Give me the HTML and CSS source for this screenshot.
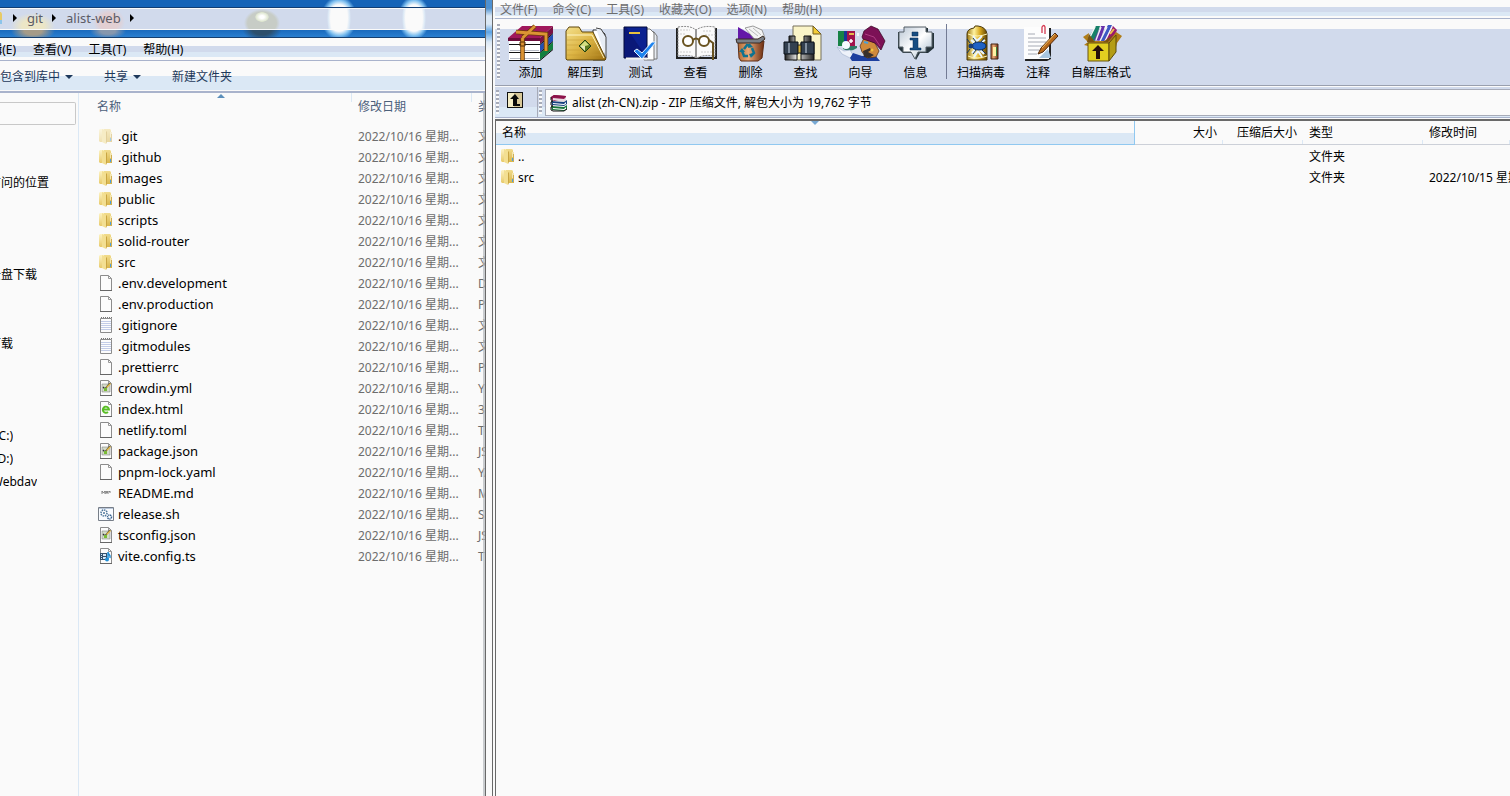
FILE: index.html
```html
<!DOCTYPE html>
<html lang="zh-CN">
<head>
<meta charset="utf-8">
<title>alist-web</title>
<link rel="stylesheet" href="styles.css">
</head>
<body>
<svg class="defs" aria-hidden="true">
  <defs>
    <linearGradient id="gold" x1="0" x2="1"><stop offset="0" stop-color="#9a7410"/><stop offset=".35" stop-color="#fff3a0"/><stop offset=".65" stop-color="#d9a91f"/><stop offset="1" stop-color="#5f4305"/></linearGradient>
    <linearGradient id="fold" x1="0" y1="0" x2="1" y2="1"><stop offset="0" stop-color="#f4e08c"/><stop offset=".5" stop-color="#dcb443"/><stop offset="1" stop-color="#9c6f10"/></linearGradient>
    <linearGradient id="steel" x1="0" x2="1"><stop offset="0" stop-color="#222"/><stop offset=".4" stop-color="#e8e8e8"/><stop offset="1" stop-color="#222"/></linearGradient>
    <linearGradient id="clay" x1="0" x2="1"><stop offset="0" stop-color="#b06a34"/><stop offset=".4" stop-color="#e8a878"/><stop offset="1" stop-color="#6b2c10"/></linearGradient>
    <linearGradient id="bub" x1="0" y1="0" x2="1" y2="1"><stop offset="0" stop-color="#b9c6d4"/><stop offset=".5" stop-color="#fff"/><stop offset="1" stop-color="#9db4c8"/></linearGradient>
    <linearGradient id="dir" x1="0" x2="0" y1="0" y2="1"><stop offset="0" stop-color="#f2dc8c"/><stop offset="1" stop-color="#d9b64c"/></linearGradient>
    <linearGradient id="dirl" x1="0" x2="0" y1="0" y2="1"><stop offset="0" stop-color="#fdf3c4"/><stop offset="1" stop-color="#e8ca6a"/></linearGradient>
  </defs>
  <symbol id="i-folder" viewBox="0 0 16 16"><path d="M1 2l1-1h5v13H2l-1-1z" fill="url(#dirl)"/><path d="M6 1h6l1 1v12H7z" fill="url(#dir)"/><path d="M4 1l4 2v13l-4-2z" fill="#f3df92"/><path d="M8 3v13l1-2V4z" fill="#c9a542"/><path d="M12 4h2v5h-2z" fill="#f4e6b0"/><path d="M12 10h1v3h-1z" fill="#4b9fe0"/><path d="M13 6h1v8h-1z" fill="#cfae52"/></symbol>
  <symbol id="i-page" viewBox="0 0 16 16"><path d="M2.500.5h8l3 3v12h-11z" fill="#fcfcfc" stroke="#8c8c8c"/><path d="M10.500.5v3h3" fill="none" stroke="#999"/><path d="M2 15.500h12" stroke="#666"/></symbol>
  <symbol id="i-text" viewBox="0 0 16 16"><path d="M2.500 1.500h11v14h-11z" fill="#fcfcfc" stroke="#8c8c8c"/><path d="M3 .5h11" stroke="#777" stroke-dasharray="1 1"/><path d="M3 4.500h10M3 6.500h10M3 8.500h10M3 10.500h10M3 12.500h10" stroke="#c3cde8"/></symbol>
  <symbol id="i-edit" viewBox="0 0 16 16"><use href="#i-page"/><path d="M4 4h8v8H4z" fill="#d4dbca" stroke="#777" stroke-width=".5"/><path d="M5 7l2 2 5-6" fill="none" stroke="#333" stroke-width="1.300"/><path d="M6 8h3v3H6z" fill="#79bb35"/><path d="M8 7l4-4 1 1-4 4z" fill="#e4b843"/></symbol>
  <symbol id="i-html" viewBox="0 0 16 16"><use href="#i-page"/><path d="M5 8.500h6a3.100 3.100 0 1 0-1 2.500" fill="none" stroke="#58bd24" stroke-width="1.900"/></symbol>
  <symbol id="i-md" viewBox="0 0 16 16"><path d="M4 9V6l1.500 2L7 6v3M8 9V6l1 2 1-2v3M11 7l1-1v2" fill="none" stroke="#777" stroke-width=".9"/></symbol>
  <symbol id="i-sh" viewBox="0 0 16 16"><path d="M.5 1.500h15v13H.5z" fill="#f8fbff" stroke="#777e88"/><path d="M1 2.500h14" stroke="#b9c6d8"/><circle cx="6" cy="7" r="3" fill="#fff" stroke="#4b759b" stroke-width="1.500" stroke-dasharray="1.500 .8"/><circle cx="6" cy="7" r="1" fill="#4b759b"/><circle cx="11.500" cy="11" r="2" fill="#fff" stroke="#35618f" stroke-width="1.500" stroke-dasharray="1.200 .6"/></symbol>
  <symbol id="i-ts" viewBox="0 0 16 16"><use href="#i-page"/><path d="M2 5h7v7H2z" fill="#35526f"/><path d="M3 6h1v1H3zm0 2h1v1H3zm0 2h1v1H3zM5 6h3v2H5zm0 3h3v2H5z" fill="#d8e8f5"/><path d="M10 11V4c0 3 3 2 2 6" fill="none" stroke="#218fd7" stroke-width="1.500"/><circle cx="9" cy="11.500" r="2" fill="#218fd7"/></symbol>
  <symbol id="i-books" viewBox="0 0 18 18"><path d="M1 3l3-2 12 1v4L4 7 1 5z" fill="#951954"/><path d="M3 4l11 1 2-2v3l-2 2L3 6z" fill="#e6dbe0"/><path d="M1 3l3-2 12 1-2 2z" fill="#8b1249"/><path d="M1 7l13 1 3-2v4l-3 2-12-1z" fill="#17417f"/><path d="M3 9l11 1 2-2v2l-2 1-11-1z" fill="#fff"/><path d="M1 12l13 1 3-2v4l-3 2-12-1z" fill="#18753b"/><path d="M3 14l11 1 2-2v2l-2 1-11-1z" fill="#fff"/><path d="M1 3v3l2 1-2 1v3l2 1-2 1v3l2 1h11l3-2" fill="none" stroke="#111"/></symbol>
</svg>

<main class="desktop">
  <section class="explorer" aria-label="alist-web">
    <header class="glass">
      <nav class="address" aria-label="地址">
        <svg class="addr-folder" viewBox="0 0 2 14"><path d="M0 1h1l1 2v9H0z" fill="#e7ca66"/><path d="M0 9h2v4H0z" fill="#8cc4ea"/></svg>
        <i class="crumb-arrow"></i><a href="#git">git</a><i class="crumb-arrow"></i><a href="#alist-web">alist-web</a><i class="crumb-arrow"></i>
      </nav>
    </header>
    <div class="menubar">
      <button class="cut">编辑(E)</button><button>查看(V)</button><button>工具(T)</button><button>帮助(H)</button>
    </div>
    <div class="commands">
      <button class="cut">包含到库中<i class="drop"></i></button><button>共享<i class="drop"></i></button><button>新建文件夹</button>
    </div>
    <div class="panes">
      <aside class="sidebar">
        <div class="side-box"></div>
        <ul class="tree">
          <li class="w-long">访问的位置</li>
          <li class="w-mid gap-3">云盘下载</li>
          <li class="w-short gap-2">下载</li>
          <li class="w-short gap-3">(C:)</li>
          <li class="w-short">(D:)</li>
          <li class="w-mid">Webdav</li>
        </ul>
      </aside>
      <div class="files">
        <i class="sort-up"></i>
        <table>
          <colgroup><col class="c-name"><col class="c-date"><col></colgroup>
          <thead><tr><th>名称</th><th>修改日期</th><th>类型</th></tr></thead>
          <tbody>
            <tr><td><svg class="ico faded"><use href="#i-folder"/></svg>.git</td><td>2022/10/16 星期...</td><td>文件夹</td></tr>
            <tr><td><svg class="ico"><use href="#i-folder"/></svg>.github</td><td>2022/10/16 星期...</td><td>文件夹</td></tr>
            <tr><td><svg class="ico"><use href="#i-folder"/></svg>images</td><td>2022/10/16 星期...</td><td>文件夹</td></tr>
            <tr><td><svg class="ico"><use href="#i-folder"/></svg>public</td><td>2022/10/16 星期...</td><td>文件夹</td></tr>
            <tr><td><svg class="ico"><use href="#i-folder"/></svg>scripts</td><td>2022/10/16 星期...</td><td>文件夹</td></tr>
            <tr><td><svg class="ico"><use href="#i-folder"/></svg>solid-router</td><td>2022/10/16 星期...</td><td>文件夹</td></tr>
            <tr><td><svg class="ico"><use href="#i-folder"/></svg>src</td><td>2022/10/16 星期...</td><td>文件夹</td></tr>
            <tr><td><svg class="ico"><use href="#i-page"/></svg>.env.development</td><td>2022/10/16 星期...</td><td>DE</td></tr>
            <tr><td><svg class="ico"><use href="#i-page"/></svg>.env.production</td><td>2022/10/16 星期...</td><td>PR</td></tr>
            <tr><td><svg class="ico"><use href="#i-text"/></svg>.gitignore</td><td>2022/10/16 星期...</td><td>文本</td></tr>
            <tr><td><svg class="ico"><use href="#i-text"/></svg>.gitmodules</td><td>2022/10/16 星期...</td><td>文本</td></tr>
            <tr><td><svg class="ico"><use href="#i-page"/></svg>.prettierrc</td><td>2022/10/16 星期...</td><td>PR</td></tr>
            <tr><td><svg class="ico"><use href="#i-edit"/></svg>crowdin.yml</td><td>2022/10/16 星期...</td><td>YM</td></tr>
            <tr><td><svg class="ico"><use href="#i-html"/></svg>index.html</td><td>2022/10/16 星期...</td><td>36</td></tr>
            <tr><td><svg class="ico"><use href="#i-page"/></svg>netlify.toml</td><td>2022/10/16 星期...</td><td>TO</td></tr>
            <tr><td><svg class="ico"><use href="#i-edit"/></svg>package.json</td><td>2022/10/16 星期...</td><td>JS</td></tr>
            <tr><td><svg class="ico"><use href="#i-page"/></svg>pnpm-lock.yaml</td><td>2022/10/16 星期...</td><td>YA</td></tr>
            <tr><td><svg class="ico"><use href="#i-md"/></svg>README.md</td><td>2022/10/16 星期...</td><td>MD</td></tr>
            <tr><td><svg class="ico"><use href="#i-sh"/></svg>release.sh</td><td>2022/10/16 星期...</td><td>SH</td></tr>
            <tr><td><svg class="ico"><use href="#i-edit"/></svg>tsconfig.json</td><td>2022/10/16 星期...</td><td>JS</td></tr>
            <tr><td><svg class="ico"><use href="#i-ts"/></svg>vite.config.ts</td><td>2022/10/16 星期...</td><td>TS</td></tr>
          </tbody>
        </table>
      </div>
    </div>
  </section>
  <div class="frame-edge"></div>
  <section class="archive" aria-label="alist (zh-CN).zip">
    <div class="rar-menu">
      <button>文件(F)</button><button>命令(C)</button><button>工具(S)</button><button>收藏夹(O)</button><button>选项(N)</button><button>帮助(H)</button>
    </div>
    <div class="rar-tools">
      <i class="grip"></i>
      <button><svg viewBox="0 0 44 36"><path d="M-1 13L13 1h31L31 13z" fill="#a0185c"/><path d="M-1 13h32v3H-1z" fill="#6d0d3c"/><path d="M0 16h31v3H0z" fill="#fff"/><path d="M31 13L44 1v7L31 19z" fill="#7a1044"/><path d="M31 20L44 9v7L31 27z" fill="#2450b4"/><path d="M31 28L44 17v7L31 35z" fill="#12803f"/><path d="M0 20h31v7H0zM0 28h31v7H0z" fill="#fff"/><path d="M0 19.500h31L44 8.500M0 27.500h31L44 16.500M0 35.500h31L44 24.500" fill="none" stroke="#111"/><path d="M1 25.500h29M1 33.500h29" stroke="#b8bcc6"/><path d="M13.500 13v22M13.500 13L26 1M7 7l30 2v17" stroke="#6b3c08" stroke-width="4.500" fill="none"/><path d="M13.500 13v22M13.500 13L26 1M7 7l30 2v17" stroke="#dc9434" stroke-width="2.800" fill="none"/><path d="M11 17h5v4h-5z" fill="none" stroke="#573008"/></svg>添加</button>
      <button><svg viewBox="0 0 44 36"><path d="M29 5h8l4 4v26H29z" fill="#fff" stroke="#333"/><path d="M32 3l5 1 5 8v21" fill="#e8edf5" stroke="#444"/><path d="M2 34V6l3-4h10l3 5h11l13 27-1 1H3z" fill="url(#fold)" stroke="#5f460d"/><path d="M3 10h25l12 23" fill="none" stroke="#fff5c4"/><path d="M3 15h27M3 20h30M3 25h32M3 30h35" stroke="#c69b34" opacity=".5"/><path d="M15 21l6-6 6 6-6 6z" fill="#5d7d22" stroke="#234311"/><path d="M16 21l5-5 4 4-4 1z" fill="#d4df82"/><path d="M16 21h5v5z" fill="#e4e9b8"/></svg>解压到</button>
      <button><svg viewBox="0 0 44 36"><path d="M28 5l7 2 3 4v23H26z" fill="#e8ecf2" stroke="#777"/><path d="M25 4h6l4 4v27H25z" fill="#fff" stroke="#777"/><path d="M5 2h23v31H5z" fill="#0c2290"/><path d="M5 33V2h2l21 31z" fill="#0a1878"/><path d="M5 2h23v31H5z" fill="none" stroke="#030a3a"/><path d="M10 8h11" stroke="#e8c23d" stroke-width="2"/><path d="M7 33.500h21" stroke="#f3f3f3" stroke-width="2"/><path d="M15 26l3-2 5 4 10-11 4 0-14 17z" fill="#1d83ee" stroke="#e8f4ff"/></svg>测试</button>
      <button><svg viewBox="0 0 44 36"><path d="M2 3h2v29h37V3h2v31H2z" fill="#222"/><path d="M4 2c7-1 13-1 18 3 6-4 12-4 19-3v29c-7-1-13-1-18 2-6-3-12-3-19-2z" fill="#fafafa" stroke="#8b8b8b" stroke-dasharray="2 1"/><path d="M22 4v29" stroke="#999" stroke-width="2"/><path d="M6 5h10M6 9h6M29 6h9M31 10h8M6 27h12M27 27h11" stroke="#ccc" stroke-dasharray="2 1"/><circle cx="14" cy="16" r="5" fill="#fff" stroke="#68521f" stroke-width="2"/><circle cx="30" cy="16" r="5" fill="#fff" stroke="#68521f" stroke-width="2"/><path d="M19 15q3-3 6 0M35 15l4 3v17" fill="none" stroke="#68521f" stroke-width="2"/></svg>查看</button>
      <button><svg viewBox="0 0 44 36"><path d="M9 2l22 13H9z" fill="#6418a8"/><path d="M12 1l19 14" stroke="#fff" stroke-width="2"/><path d="M16 3l8-2 9 4 3 8-9 3z" fill="#f4f4f4" stroke="#999"/><path d="M20 4l9 7M24 3l8 7" stroke="#bbb"/><path d="M9 16h26l-2 17-4 3H12l-2-3z" fill="url(#clay)" stroke="#5e2b12"/><path d="M7 14h22l5-3 2 3-5 4H8z" fill="#7a7f86" stroke="#3b2b23"/><path d="M15 24l3-4 4 1M23 23l2 5-3 3M19 31h-4l-2-5" fill="none" stroke="#0e7391" stroke-width="2.500"/><path d="M20 18l4 4-5 1zM25 28l-3 5-2-4zM10 27l3-4 3 4z" fill="#0e7391"/></svg>删除</button>
      <button><svg viewBox="0 0 44 36"><path d="M9 1h20l8 8v26H9z" fill="#faf4c8" stroke="#77715d"/><path d="M29 1l8 8h-8z" fill="#f3cc35" stroke="#725d20"/><path d="M5 11h6v8H5zM20 11h7v8h-7z" fill="url(#steel)" stroke="#111"/><path d="M1 18h12v17H1zM17 18h13v17H17z" fill="url(#steel)" stroke="#111"/><path d="M0 17h14v12H0zM17 17h13v12H17z" fill="#334050" stroke="#0b1119"/><path d="M5 18v10M22 18v10" stroke="#8390a0" stroke-width="2"/><path d="M14 20h3v8h-3z" fill="#d9b337" stroke="#222"/></svg>查找</button>
      <button><svg viewBox="0 0 44 36"><path d="M-1 6h6v15h-6z" fill="#178245"/><path d="M5 6h3v15H5z" fill="#173698"/><path d="M8 6h8v15H8z" fill="#a1134c"/><path d="M10 9h5" stroke="#e6b94a" stroke-width="2"/><path d="M4 21h14v2q-7 5-14 1z" fill="#2e7a66"/><circle cx="7" cy="20" r="4" fill="#f4fcff"/><path d="M-2 22l7 4 6-1 3 5-3 3-8-4z" fill="#eef2fa" stroke="#9fb0cc" stroke-width=".6"/><path d="M11 33l3-5 9 3 13-1 5 6H13z" fill="#1d3f9f"/><path d="M25 13l11 5 4 8-3 6-9 1-5-6-2-6z" fill="#d08a3c" stroke="#4c2614" stroke-width=".7"/><path d="M24 26l7-3 1 2-3 2 6 3-5 3-5-1z" fill="#38302c"/><path d="M25 17l4 1" stroke="#4aa0d8" stroke-width="2"/><path d="M23 12l2-6 7-5 7 3 7 12-4 9-6-7-12-4z" fill="#7c1156" stroke="#34051f" stroke-width=".7"/><path d="M26 9l9 3 6 9" fill="none" stroke="#ae3b82"/><path d="M14 16h-4M12 14v4M19 8v3" stroke="#fff" stroke-width="1.500"/><circle cx="33" cy="25" r="1.500" fill="#f3c23f"/></svg>向导</button>
      <button><svg viewBox="0 0 44 36"><path d="M11 3h23v5h6v15l-6 5h-8l-4 7-4-7h-9l-5-5V7h7z" fill="#26343b"/><path d="M10 2h22v5h6v15h-6v5h-8l-3 7-4-7H9v-5H5V7h5z" fill="url(#bub)" stroke="#555f66"/><path d="M18 7h6v4h-6zM16 13h8v10h3v2H16v-2h3v-8h-3z" fill="#174d82" stroke="#072b50" stroke-width=".5"/></svg>信息</button>
      <i class="tool-sep"></i>
      <button class="fit"><svg viewBox="0 0 44 36"><path d="M8 35V9q0-5 7-6 0-3 4-2 8 1 9 8v26z" fill="url(#gold)" stroke="#4b390b"/><path d="M9 9q9 4 19 0M9 31q9 4 19 0" stroke="#fff6b8" fill="none"/><path d="M14 11l4 5 5-5M12 15l5 4M26 15l-6 4M13 28l5-5M25 29l-6-6M15 32l4-6 4 6" fill="none" stroke="#e9f5ff" stroke-width="2"/><ellipse cx="20" cy="21" rx="7" ry="4" fill="#1f62c4" stroke="#07295b"/><circle cx="12" cy="21" r="2.500" fill="#173e79"/><path d="M11 18l-3-4M11 24l-3 4M17 17l-3-4M22 17l3-4M17 25l-3 4M23 25l4 4" stroke="#163661"/><path d="M32 19h7v15h-7z" fill="url(#clay)" stroke="#452718"/><path d="M34 22h3v9h-3z" fill="#fff2a4"/><path d="M37 22h1v9h-1z" fill="#3b803b"/></svg>扫描病毒</button>
      <button class="fit"><svg viewBox="0 0 44 36"><path d="M11 3h24v31l-4 2H9z" fill="#222"/><path d="M8 2h25v32H8z" fill="#fdfdfd"/><path d="M12 9h7M12 13h18M12 17h18M12 21h15M12 25h11M12 29h9" stroke="#a6aab4"/><path d="M26 8V2q2-3 3 0v7" fill="none" stroke="#d53b52" stroke-width="1.300"/><path d="M22 29l3-6L39 8l3 3-15 16z" fill="#b96b1c" stroke="#542a0b"/><path d="M26 23L39 9" stroke="#eec067"/><path d="M23 33l9-9 3 9z" fill="#a8c6e0"/></svg>注释</button>
      <button class="fit"><svg viewBox="0 0 44 36"><path d="M9 13L17 1h4l-5 15z" fill="#188069"/><path d="M15 15L22 1h4l-5 15z" fill="#6730aa"/><path d="M20 16L29 0h4l-7 16z" fill="#3d58c4"/><path d="M25 16L34 1l4 4-5 11z" fill="#99186f"/><path d="M16 2l-6 12M22 2l-5 13M28 2l-7 14M33 2l-7 14" stroke="#f4f4f4" stroke-width="1.400"/><path d="M31 9l4-5" stroke="#efc14d" stroke-width="2"/><path d="M4 12l6-4-1 8h21l7-9 6 4-5 7-2 8-7 9H9V21l-4-1 4-3z" fill="#b07d18"/><path d="M9 18h21v18H9z" fill="#e2cf20" stroke="#685510"/><path d="M30 18l7-8v17l-7 9z" fill="#b49d14" stroke="#5d4d0a"/><path d="M8 17l2-8 6 8zM24 17l10-7-5 7z" fill="#7b5510"/><path d="M17 34V26h-4l6-6 6 6h-4v8z" fill="#26100b"/></svg>自解压格式</button>
    </div>
    <div class="rar-path">
      <i class="grip"></i>
      <button class="up" aria-label="上一级"><svg viewBox="0 0 16 16"><path d="M0 0h16v16H0z" fill="#111"/><path d="M1 1h14v14H1z" fill="#d8c898"/><path d="M1 1h6v14H1z" fill="#f4ecc4"/><path d="M3 7l5-5 4 5h-2v5h3v2H6V7z" fill="#090909"/></svg></button>
      <i class="grip"></i>
      <label class="path-box"><svg viewBox="0 0 18 18"><use href="#i-books"/></svg><input aria-label="路径" value="alist (zh-CN).zip - ZIP 压缩文件, 解包大小为 19,762 字节"></label>
    </div>
    <div class="rar-list">
      <table>
        <colgroup><col class="r-name"><col class="r-size"><col class="r-packed"><col class="r-type"><col class="r-time"></colgroup>
        <thead><tr><th class="sorted">名称<i class="sort-down"></i></th><th class="num">大小</th><th class="num">压缩后大小</th><th>类型</th><th>修改时间</th></tr></thead>
        <tbody>
          <tr><td><svg class="ico"><use href="#i-folder"/></svg>..</td><td></td><td></td><td>文件夹</td><td></td></tr>
          <tr><td><svg class="ico"><use href="#i-folder"/></svg>src</td><td></td><td></td><td>文件夹</td><td>2022/10/15 星期六</td></tr>
        </tbody>
      </table>
    </div>
  </section>
</main>
</body>
</html>
```
FILE: styles.css
```css
* { box-sizing: border-box; }
body {
  margin: 0;
  background: #fafafa;
  color: #000;
  font: 12px/20px "Noto Sans", "Noto Sans CJK SC", sans-serif;
}
button, input { font: inherit; color: inherit; background: none; border: 0; padding: 0; margin: 0; white-space: nowrap; }
a { color: inherit; text-decoration: none; }
table { border-collapse: collapse; table-layout: fixed; width: 100%; }
th, td { padding: 0; text-align: left; font-weight: normal; white-space: nowrap; overflow: hidden; }
.defs { position: absolute; width: 0; height: 0; }
.desktop { display: flex; height: 100vh; overflow: hidden; }

/* Explorer window */
.explorer {
  flex: 0 1 486px;
  min-width: 0;
  display: flex;
  flex-direction: column;
  overflow: hidden;
  border-right: 1px solid #696969;
}
.glass {
  padding: 7px 0;
  border-bottom: 1px solid #153f70;
  background:
    radial-gradient(ellipse 18px 22px at 339px 18px, #fafafa 60%, #7fc0f0 80%, transparent),
    radial-gradient(ellipse 16px 22px at 414px 18px, #fafafa 60%, #7fc0f0 80%, transparent),
    radial-gradient(ellipse 20px 14px at 262px 28px, #2c4f6c 50%, transparent),
    radial-gradient(ellipse 22px 10px at 33px 31px, #a59b88 40%, transparent),
    radial-gradient(ellipse 18px 8px at 108px 31px, #8797ad 40%, transparent),
    linear-gradient(#1664b8 28px, #2a7fd0 37px);
}
.address {
  display: flex;
  align-items: center;
  height: 23px;
  padding-bottom: 2px;
  border-top: 1px solid #123e74;
  border-bottom: 1px solid #fafafa;
  box-shadow: inset 0 1px #fafafa;
  color: #5c5c66;
  font-size: 13px;
  background:
    radial-gradient(ellipse 12px 28px at 339px 10px, #fafafa 70%, #dbe8f5 90%, transparent),
    radial-gradient(ellipse 12px 28px at 414px 10px, #fafafa 70%, #dbe8f5 90%, transparent),
    radial-gradient(ellipse 7px 5px at 262px 9px, #fff 30%, #dde5cf 90%, transparent),
    radial-gradient(ellipse 18px 14px at 262px 15px, #c7ccc6 80%, transparent),
    radial-gradient(ellipse 22px 13px at 33px 18px, #ece6c6 50%, transparent),
    radial-gradient(ellipse 16px 14px at 109px 14px, #e2cfd2 60%, transparent),
    #d1daec;
}
.addr-folder { width: 2px; height: 14px; margin-right: 11px; }
.crumb-arrow { border: 4px solid transparent; border-left-color: #000; border-right: 0; margin-right: 10px; }
.address a { margin-right: 9px; }
.menubar {
  display: flex;
  gap: 17px;
  height: 23px;
  border-bottom: 1px solid #a9b3cc;
  background: linear-gradient(#fafafa 8px, #d1daec 8px 14px, #dbe8f5 14px 19px, #fafafa 19px);
}
.menubar .cut { width: 16px; display: flex; justify-content: flex-end; overflow: hidden; }
.menubar button { line-height: 24px; height: 22px; }
.commands {
  display: flex;
  gap: 31px;
  height: 32px;
  color: #1e395b;
  border-bottom: 2px solid #a9b3cc;
  background: linear-gradient(#fafafa 15px, #dbe8f5 15px 29px, #fafafa 29px);
}
.commands button { padding-top: 2px; }
.drop { display: inline-block; margin-left: 5px; vertical-align: 2px; border: 4px solid transparent; border-top-color: #1e395b; border-bottom: 0; }
.panes { flex: 1; display: flex; min-height: 0; }
.sidebar { flex: 0 0 79px; padding-top: 9px; border-right: 1px solid #dbe8f5; }
.side-box { height: 23px; margin-right: 2px; border: 1px solid #c8c8c8; border-left: 0; border-radius: 0 2px 2px 0; }
.tree { list-style: none; margin: 46px 0 0; padding: 0; line-height: 23px; }
.tree li { display: flex; justify-content: flex-end; overflow: hidden; white-space: nowrap; }
.w-long { width: 49px; }
.w-mid { width: 37px; }
.w-short { width: 13px; }
.tree .gap-3 { margin-top: 69px; }
.tree .gap-2 { margin-top: 46px; }
.files { position: relative; flex: 1; min-width: 0; overflow: hidden; }
.files::after { content: ""; position: absolute; inset: 0 0 0 auto; width: 2px; background: #b4b8bc; opacity: .7; }
.sort-up { position: absolute; left: 138px; top: 1px; border: 4px solid transparent; border-bottom-color: #5c8fbb; border-top: 0; }
.c-name { width: 273px; }
.c-date { width: 120px; }
.files th { height: 32px; color: #4c607a; padding: 0 0 4px 6px; background: linear-gradient(#dbe8f5, #dbe8f5) right top / 1px 9px no-repeat; }
.files th:first-child { padding-left: 18px; }
.files td { height: 21px; line-height: 19px; color: #6d6d6d; padding: 2px 0 0 6px; }
.files td:first-child { padding: 0 0 0 19px; color: #000; font-size: 13px; line-height: 20px; }
.ico { width: 16px; height: 16px; margin-right: 4px; vertical-align: -3px; }
.faded { opacity: .5; }

/* Strip of desktop between the two windows */
.frame-edge {
  flex: 0 0 6px;
  background: linear-gradient(#4e91d2 8px, #dbe8f5 16px 24px, #5ca4e6 32px, #dbe8f5 42px, #fafafa 52px);
}

/* Archive window */
.archive { flex: 1; min-width: 0; display: flex; flex-direction: column; border-left: 1px solid #696969; padding-left: 2px; overflow: hidden; }
.rar-menu {
  display: flex;
  gap: 15px;
  height: 19px;
  padding-left: 5px;
  color: #6d6d6d;
  border-bottom: 1px solid #a9b3cc;
  background: linear-gradient(#fafafa 7px, #d1daec 7px 12px, #dbe8f5 12px 16px, #fafafa 16px);
}
.rar-menu button { line-height: 20px; height: 18px; }
.rar-tools {
  display: flex;
  height: 67px;
  padding: 5px 0 4px 1px;
  border-bottom: 1px solid #999fae;
  background: linear-gradient(#fafafa 10px, #d1daec 10px);
}
.rar-tools button { width: 55px; display: flex; flex-direction: column; align-items: center; line-height: 20px; gap: 2px; padding-top: 1px; }
.rar-tools svg { width: 44px; height: 36px; overflow: visible; }
.rar-tools .fit { width: auto; padding: 1px 6px 0 5px; }
.tool-sep { width: 1px; margin: 0 5px 2px 3px; background: #737b94; }
.grip { width: 3px; margin: 3px 3px 3px 1px; background: repeating-linear-gradient(#a7abb8 0 2px, #fafafa 2px 4px); }
.rar-tools .grip { margin: 0 3px 2px 1px; }
.rar-path {
  display: flex;
  height: 32px;
  border-top: 1px solid #fafafa;
  border-bottom: 1px solid #a9b3cc;
  background: linear-gradient(#d1daec 20px, #dbe8f5 20px);
}
.up { width: 36px; border-right: 1px solid #a7abb8; }
.up svg { width: 16px; height: 16px; display: block; margin: 0 0 4px 5px; }
.path-box { flex: 1; display: flex; align-items: center; gap: 4px; margin: 2px 0 1px; padding-left: 4px; border: 1px solid #a7abb8; border-right: 0; background: #fafafa; }
.path-box svg { width: 18px; height: 18px; }
.path-box input { flex: 1; outline: 0; }
.rar-list { flex: 1; min-height: 0; overflow: hidden; margin-top: 1px; border: 1px solid #696969; border-top-width: 2px; border-right: 0; border-bottom: 0; }
.r-size { width: 89px; }
.r-packed { width: 80px; }
.r-type { width: 120px; }
.r-time { width: 87px; }
.rar-list th { position: relative; height: 23px; padding: 2px 6px 0; border-bottom: 1px solid #ccd0d8; background: linear-gradient(#dbe8f5, #dbe8f5) right bottom / 1px 4px no-repeat; }
.rar-list th.sorted { border-right: 1px solid #90c8f0; border-bottom-color: #90c8f0; background: linear-gradient(#fafafa 12px, #dbe8f5 12px); }
.rar-list th.num { text-align: right; }
.sort-down { position: absolute; left: 50%; top: 0; margin-left: -4px; border: 4px solid transparent; border-top-color: #78a9d4; border-bottom: 0; }
.rar-list td { height: 21px; line-height: 19px; padding: 2px 0 0 6px; }
.rar-list td:first-child { padding-left: 4px; }
.rar-list .ico { margin-right: 2px; }
```
